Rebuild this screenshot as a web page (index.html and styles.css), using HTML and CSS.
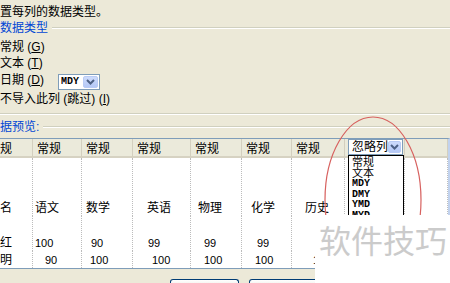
FILE: index.html
```html
<!DOCTYPE html>
<html lang="zh-CN">
<head>
    <meta charset="UTF-8">
    <title>文本导入向导</title>
    <link rel="stylesheet" href="styles.css">
</head>
<body>
    <div class="dialog">
        <p class="intro">置每列的数据类型。</p>
        <div class="group">
            <div class="group-title"><span>数据类型</span></div>
            <div class="opt first">常规 (<u>G</u>)</div>
            <div class="opt">文本 (<u>T</u>)</div>
            <div class="opt date">
                <span class="opt-label">日期 (<u>D</u>)</span>
                <span class="combo small">
                    <span class="combo-text mono">MDY</span>
                    <span class="combo-btn"><svg width="9" height="6" viewBox="0 0 9 6"><path d="M1 1 L4.5 4.5 L8 1" fill="none" stroke="#4d6185" stroke-width="2"/></svg></span>
                </span>
            </div>
            <div class="opt skip">不导入此列 (跳过) (<u>I</u>)</div>
        </div>
        <div class="group-title preview-title"><span>据预览:</span></div>
        <div class="preview">
            <div class="hd">规</div>
            <div class="hd">常规</div>
            <div class="hd">常规</div>
            <div class="hd">常规</div>
            <div class="hd">常规</div>
            <div class="hd">常规</div>
            <div class="hd">常规</div>
            <div class="hd hd-combo">
                <span class="combo wide">
                    <span class="combo-text">忽略列</span>
                    <span class="combo-btn"><svg width="9" height="6" viewBox="0 0 9 6"><path d="M1 1 L4.5 4.5 L8 1" fill="none" stroke="#4d6185" stroke-width="2"/></svg></span>
                </span>
                <ul class="drop-list">
                    <li>常规</li>
                    <li>文本</li>
                    <li class="mono">MDY</li>
                    <li class="mono">DMY</li>
                    <li class="mono">YMD</li>
                    <li class="mono">MYD</li>
                </ul>
            </div>
            <div class="hd"></div>

            <div class="cell">名</div>
            <div class="cell in-2">语文</div>
            <div class="cell in-4">数学</div>
            <div class="cell in-14">英语</div>
            <div class="cell in-7">物理</div>
            <div class="cell in-9">化学</div>
            <div class="cell in-13">历史</div>
            <div class="cell"></div>
            <div class="cell"></div>

            <div class="cell">红</div>
            <div class="cell num in-2">100</div>
            <div class="cell num in-9">90</div>
            <div class="cell num in-15">99</div>
            <div class="cell num in-13">99</div>
            <div class="cell num in-15">99</div>
            <div class="cell num"></div>
            <div class="cell"></div>
            <div class="cell"></div>

            <div class="cell">明</div>
            <div class="cell num in-12">90</div>
            <div class="cell num in-8">100</div>
            <div class="cell num in-19">100</div>
            <div class="cell num in-13">100</div>
            <div class="cell num in-13">100</div>
            <div class="cell num in-21">1</div>
            <div class="cell"></div>
            <div class="cell"></div>
        </div>
        <div class="buttons">
            <span class="btn"></span>
            <span class="btn"></span>
        </div>
    </div>
    <svg class="mark" width="450" height="283" viewBox="0 0 450 283">
        <ellipse cx="373" cy="200" rx="48" ry="83" fill="none" stroke="#d7615f" stroke-width="1.2"/>
    </svg>
    <div class="watermark">软件技巧</div>
</body>
</html>
```

FILE: styles.css
```css
body {
    margin: 0;
    width: 450px;
    height: 283px;
    overflow: hidden;
    position: relative;
    background: #ece9d8;
    font-family: "Liberation Sans", "Noto Sans CJK SC", sans-serif;
    font-size: 12px;
    color: #000;
}
.intro {
    margin: 0 0 1px;
    padding-top: 5px;
    line-height: 14px;
}
.group {
    padding-bottom: 4px;
    border-bottom: 1px solid #d0d0bf;
    box-shadow: 0 1px 0 #fff;
}
.group-title {
    display: flex;
    align-items: center;
    height: 16px;
    line-height: 16px;
    color: #0046d5;
}
.group-title::after {
    content: "";
    flex: 1;
    margin-left: 4px;
    border-top: 1px solid #d0d0bf;
    border-bottom: 1px solid #fff;
}
.opt {
    height: 16px;
    line-height: 16px;
}
.opt.first {
    margin-top: 3px;
}
.opt.date {
    display: flex;
    align-items: flex-start;
    height: 18px;
    line-height: 18px;
}
.opt.skip {
    height: 20px;
    line-height: 20px;
}
.opt-label {
    width: 58px;
}
.combo {
    display: flex;
    align-items: center;
    box-sizing: border-box;
    height: 16px;
    background: #fff;
    border: 1px solid #7f9db9;
}
.combo.small {
    width: 42px;
    margin-top: 3px;
}
.combo-text {
    flex: 1;
    padding-left: 2px;
    line-height: 14px;
}
.mono {
    font-family: "Liberation Mono", monospace;
    font-size: 10px;
    font-weight: bold;
}
.combo-btn {
    display: flex;
    align-items: center;
    justify-content: center;
    width: 15px;
    height: 12px;
    margin-right: 1px;
    border-radius: 2px;
    background: linear-gradient(#cddbfc, #b4c8f6);
    border: 1px solid #b9cbf5;
    box-sizing: border-box;
}
.preview-title {
    margin-top: 6px;
    margin-bottom: 4px;
    height: 14px;
    line-height: 14px;
}
.preview {
    display: grid;
    grid-template-columns: 33px 49px 51px 58px 51px 50px 53px 60px 43px;
    grid-template-rows: 19px 58px 35px 17px;
    border-top: 1px solid #7f9db9;
    border-bottom: 1px solid #7f9db9;
    border-right: 2px solid #c1d2ee;
    background: #fff;
}
.hd {
    box-sizing: border-box;
    padding: 3px 0 0 4px;
    line-height: 14px;
    background: #ebeadb;
    border-right: 1px solid #d3cfbf;
    border-bottom: 2px solid #d6d2c2;
    white-space: nowrap;
}
.hd:first-child {
    padding-left: 0;
}
.hd-combo {
    position: relative;
    padding: 0 0 0 3px;
}
.combo.wide {
    width: 55px;
}
.combo.wide .combo-text {
    padding-left: 3px;
}
.drop-list {
    position: absolute;
    z-index: 2;
    top: 16px;
    left: 3px;
    width: 56px;
    height: 62px;
    margin: 0;
    padding: 1px 0 0 3px;
    box-sizing: border-box;
    list-style: none;
    background: #fff;
    border: 1px solid #000;
    border-bottom: none;
    overflow: hidden;
    font-size: 11px;
}
.drop-list li {
    line-height: 11px;
}
.drop-list li.mono {
    font-size: 10px;
    line-height: 10.5px;
}
.cell {
    display: flex;
    align-items: flex-end;
    box-sizing: border-box;
    padding-bottom: 1px;
    line-height: 14px;
    border-right: 1px dotted #bcbcbc;
    white-space: nowrap;
}
.cell.num {
    font-size: 11px;
}
.in-2 { padding-left: 2px; }
.in-4 { padding-left: 4px; }
.in-7 { padding-left: 7px; }
.in-8 { padding-left: 8px; }
.in-9 { padding-left: 9px; }
.in-12 { padding-left: 12px; }
.in-13 { padding-left: 13px; }
.in-14 { padding-left: 14px; }
.in-15 { padding-left: 15px; }
.in-19 { padding-left: 19px; }
.in-21 { padding-left: 21px; }
.buttons {
    display: flex;
    gap: 10px;
    margin-top: 10px;
    padding-left: 170px;
}
.btn {
    width: 67px;
    height: 4px;
    border: 1px solid #003c74;
    border-bottom: none;
    border-radius: 3px 3px 0 0;
    background: linear-gradient(#fff, #f4f3ee);
}
.mark {
    position: absolute;
    z-index: 3;
    top: 0;
    left: 0;
    pointer-events: none;
}
.watermark {
    position: absolute;
    z-index: 4;
    left: 315px;
    top: 215px;
    right: 0;
    bottom: 0;
    padding: 4px 0 0 4px;
    background: #fff;
    font-family: "Noto Sans CJK SC", sans-serif;
    font-size: 32px;
    line-height: 40px;
    color: #cbcbcb;
    white-space: nowrap;
}
```
